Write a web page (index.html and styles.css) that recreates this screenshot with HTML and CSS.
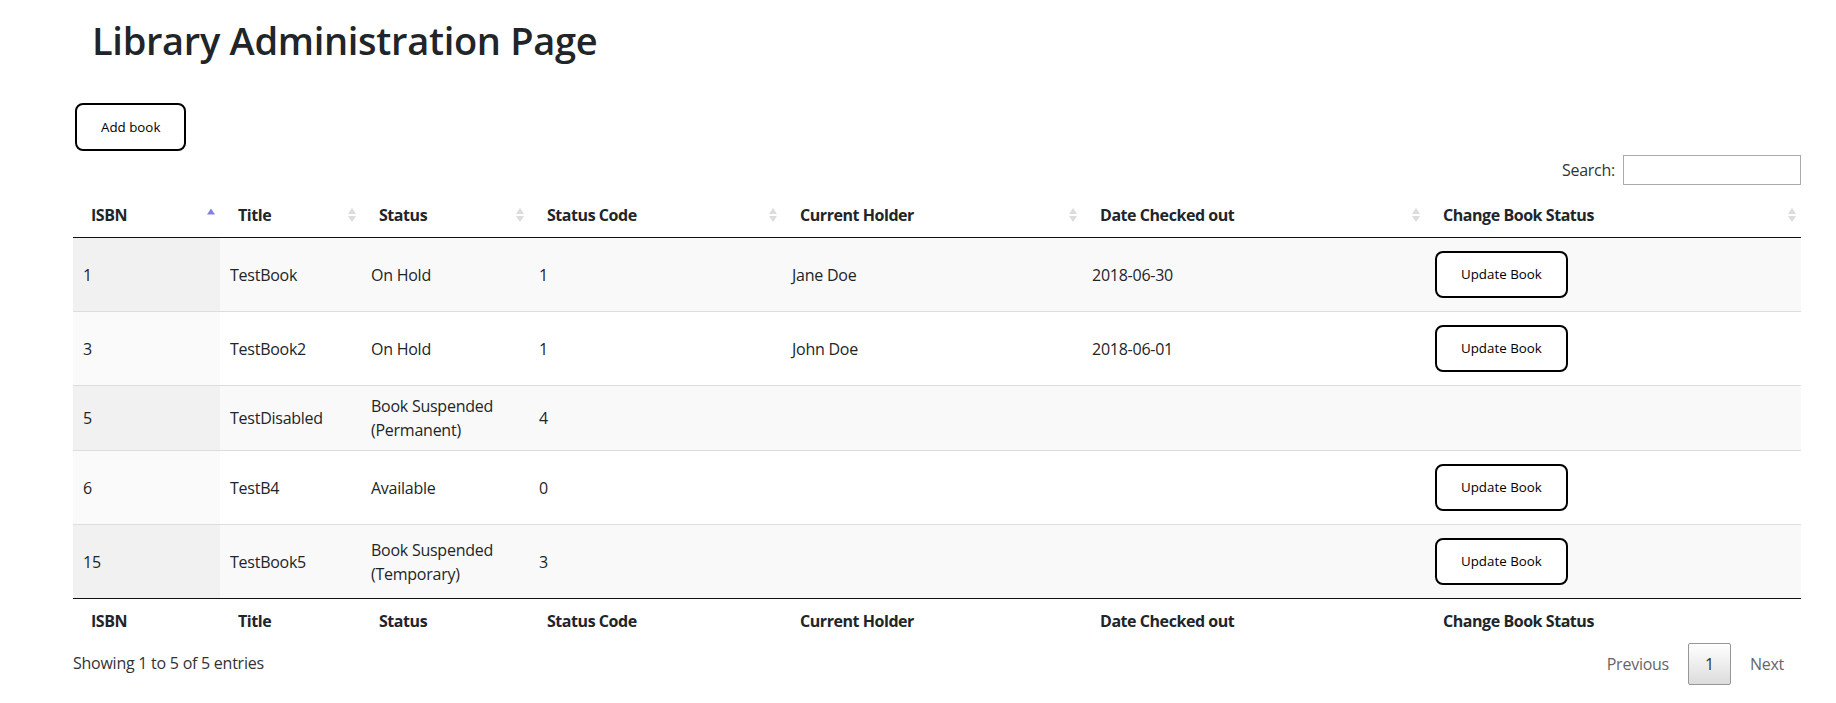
FILE: index.html
```html
<!DOCTYPE html>
<html lang="en">
<head>
<meta charset="utf-8">
<title>Library Administration Page</title>
<link rel="stylesheet" href="styles.css">
</head>
<body>
<div class="page">
  <h1 class="title">Library Administration Page</h1>
  <button class="btn add-btn" type="button">Add book</button>
  <div class="filter">
    <label class="filter-label">Search:<input class="filter-input" type="search"></label>
  </div>
  <table class="books">
    <colgroup>
      <col class="c1"><col class="c2"><col class="c3"><col class="c4"><col class="c5"><col class="c6"><col class="c7">
    </colgroup>
    <thead>
      <tr>
        <th><div class="th-in"><span>ISBN</span><svg class="sort" width="8" height="14" viewBox="0 0 8 14"><polygon points="4,0.5 8,6.5 0,6.5" fill="#8282de"/></svg></div></th>
        <th><div class="th-in"><span>Title</span><svg class="sort" width="8" height="14" viewBox="0 0 8 14"><polygon points="4,0 8,6 0,6" fill="#dcdcdc"/><polygon points="0,8 8,8 4,14" fill="#dcdcdc"/></svg></div></th>
        <th><div class="th-in"><span>Status</span><svg class="sort" width="8" height="14" viewBox="0 0 8 14"><polygon points="4,0 8,6 0,6" fill="#dcdcdc"/><polygon points="0,8 8,8 4,14" fill="#dcdcdc"/></svg></div></th>
        <th><div class="th-in"><span>Status Code</span><svg class="sort" width="8" height="14" viewBox="0 0 8 14"><polygon points="4,0 8,6 0,6" fill="#dcdcdc"/><polygon points="0,8 8,8 4,14" fill="#dcdcdc"/></svg></div></th>
        <th><div class="th-in"><span>Current Holder</span><svg class="sort" width="8" height="14" viewBox="0 0 8 14"><polygon points="4,0 8,6 0,6" fill="#dcdcdc"/><polygon points="0,8 8,8 4,14" fill="#dcdcdc"/></svg></div></th>
        <th><div class="th-in"><span>Date Checked out</span><svg class="sort" width="8" height="14" viewBox="0 0 8 14"><polygon points="4,0 8,6 0,6" fill="#dcdcdc"/><polygon points="0,8 8,8 4,14" fill="#dcdcdc"/></svg></div></th>
        <th><div class="th-in"><span>Change Book Status</span><svg class="sort" width="8" height="14" viewBox="0 0 8 14"><polygon points="4,0 8,6 0,6" fill="#dcdcdc"/><polygon points="0,8 8,8 4,14" fill="#dcdcdc"/></svg></div></th>
      </tr>
    </thead>
    <tbody>
      <tr class="odd">
        <td class="sorted">1</td><td>TestBook</td><td>On Hold</td><td>1</td><td>Jane Doe</td><td>2018-06-30</td>
        <td><button class="btn upd-btn" type="button">Update Book</button></td>
      </tr>
      <tr class="even">
        <td class="sorted">3</td><td>TestBook2</td><td>On Hold</td><td>1</td><td>John Doe</td><td>2018-06-01</td>
        <td><button class="btn upd-btn" type="button">Update Book</button></td>
      </tr>
      <tr class="odd">
        <td class="sorted">5</td><td>TestDisabled</td><td>Book Suspended (Permanent)</td><td>4</td><td></td><td></td><td></td>
      </tr>
      <tr class="even">
        <td class="sorted">6</td><td>TestB4</td><td>Available</td><td>0</td><td></td><td></td>
        <td><button class="btn upd-btn" type="button">Update Book</button></td>
      </tr>
      <tr class="odd">
        <td class="sorted">15</td><td>TestBook5</td><td>Book Suspended (Temporary)</td><td>3</td><td></td><td></td>
        <td><button class="btn upd-btn" type="button">Update Book</button></td>
      </tr>
    </tbody>
    <tfoot>
      <tr>
        <th>ISBN</th><th>Title</th><th>Status</th><th>Status Code</th><th>Current Holder</th><th>Date Checked out</th><th>Change Book Status</th>
      </tr>
    </tfoot>
  </table>
  <div class="table-footer">
    <div class="info">Showing 1 to 5 of 5 entries</div>
    <div class="paginate">
      <span class="pg-btn disabled">Previous</span><span class="pg-btn current">1</span><span class="pg-btn disabled">Next</span>
    </div>
  </div>
</div>
</body>
</html>
```

FILE: styles.css
```css
html, body {
  margin: 0;
  padding: 0;
  background: #fff;
}
body {
  font-family: "Open Sans", "Noto Sans", Arial, sans-serif;
  font-size: 16px;
  line-height: 1.5;
  color: #212529;
  letter-spacing: -0.25px;
}
.page {
  padding: 0 35px 0 73px;
}
.title {
  margin: 16px 0 0 0;
  padding-left: 19px;
  font-size: 38px;
  font-weight: 600;
  line-height: 48px;
  letter-spacing: -0.3px;
  color: #212529;
}
.btn {
  display: block;
  width: fit-content;
  font-family: "Open Sans", "Noto Sans", Arial, sans-serif;
  font-size: 13.33px;
  line-height: 19px;
  letter-spacing: 0;
  padding: 12px 24px;
  border: 2px solid #000;
  border-radius: 8px;
  background: #fff;
  color: #000;
}
.add-btn {
  margin: 39px 0 0 2px;
  padding-top: 12.5px;
  padding-bottom: 12.5px;
}
.upd-btn {
  margin: 5px 0;
}
.filter {
  display: flex;
  justify-content: flex-end;
  align-items: center;
  height: 30px;
  margin-top: 4px;
  color: #333;
}
.filter-label {
  display: flex;
  align-items: center;
}
.filter-input {
  box-sizing: border-box;
  width: 178px;
  height: 30px;
  margin-left: 8px;
  padding: 5px;
  border: 1px solid #aaa;
  border-radius: 0;
  background: transparent;
  font-size: 13.33px;
}
.books {
  width: 100%;
  margin-top: 8px;
  border-collapse: separate;
  border-spacing: 0;
  table-layout: fixed;
}
.c1 { width: 147px; }
.c2 { width: 141px; }
.c3 { width: 168px; }
.c4 { width: 253px; }
.c5 { width: 300px; }
.c6 { width: 343px; }
.c7 { width: 376px; }
.books thead th {
  padding: 10px 5px 10px 18px;
  border-bottom: 1px solid #111;
  text-align: left;
  font-weight: bold;
  letter-spacing: -0.45px;
}
.th-in {
  display: flex;
  justify-content: space-between;
  align-items: center;
}
.sort {
  display: block;
  flex: none;
}
.books tbody td {
  padding: 8px 10px;
  border-top: 1px solid #ddd;
}
.books tbody tr:first-child td {
  border-top: none;
}
.books tr.odd { background: #f9f9f9; }
.books tr.even { background: #fff; }
.books tr.odd td.sorted { background: #f1f1f1; }
.books tr.even td.sorted { background: #fafafa; }
.books tfoot th {
  padding: 10px 18px 6px 18px;
  border-top: 1px solid #111;
  text-align: left;
  font-weight: bold;
  letter-spacing: -0.45px;
}
.table-footer {
  display: flex;
  justify-content: space-between;
  align-items: flex-start;
}
.info {
  padding-top: 12px;
  color: #333;
}
.paginate {
  padding-top: 4px;
  display: flex;
}
.pg-btn {
  box-sizing: border-box;
  min-width: 1.5em;
  padding: 8px 16px;
  margin-left: 2px;
  border: 1px solid transparent;
  border-radius: 2px;
  text-align: center;
  color: #333;
}
.pg-btn.disabled {
  color: #666;
}
.pg-btn.current {
  border: 1px solid #979797;
  background: linear-gradient(to bottom, #fff 0%, #dcdcdc 100%);
  color: #333;
}
```
